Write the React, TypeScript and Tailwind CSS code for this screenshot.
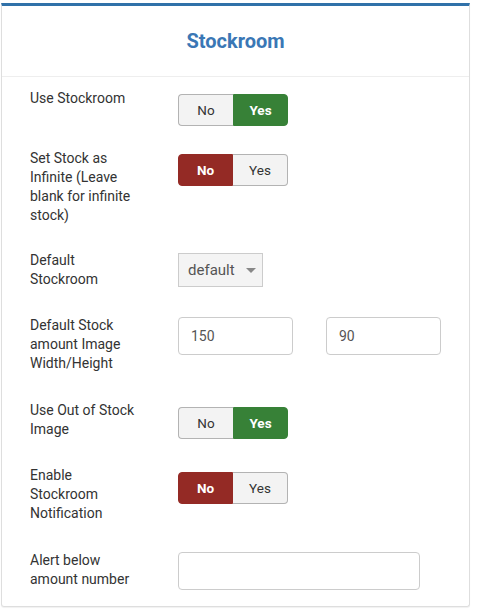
const Toggle = ({ value, className = "" }: { value: "yes" | "no"; className?: string }) => {
  const yes = value === "yes";
  return (
    <div className={`flex h-[32px] w-[110px] text-[13.5px] ${className}`}>
      <button
        className={`h-full w-[55px] rounded-l-[4px] border ${
          yes
            ? "border-[#b3b3b3] border-r-0 bg-[#f3f3f3] text-[#333]"
            : "border-[#942a25] bg-[#942a25] font-bold text-white"
        }`}
      >
        No
      </button>
      <button
        className={`h-full w-[55px] rounded-r-[4px] border ${
          yes
            ? "border-[#378137] bg-[#378137] font-bold text-white"
            : "border-[#b3b3b3] border-l-0 bg-[#f3f3f3] text-[#333]"
        }`}
      >
        Yes
      </button>
    </div>
  );
};

const Row = ({
  lines,
  className = "",
  children,
}: {
  lines: string[];
  className?: string;
  children: React.ReactNode;
}) => (
  <div className={`flex items-start ${className}`}>
    <label className="w-[176px] shrink-0 pl-[28px] text-[14px] leading-[19px] text-[#333]">
      {lines.map((l, i) => (
        <span key={i} className="block whitespace-nowrap">
          {l}
        </span>
      ))}
    </label>
    {children}
  </div>
);

const App = () => {
  return (
    <div className="min-h-screen bg-white pt-[3px] pl-px font-['Roboto',sans-serif]">
      <div className="w-[469px] rounded-b-[3px] border border-t-[3px] border-[#dedede] border-t-[#3071a9] shadow-[0_1px_1px_rgba(0,0,0,0.06)]">
        <header className="flex h-[71px] items-center justify-center border-b border-[#eeeeee]">
          <h2 className="text-[20px] font-bold leading-[28px] text-[#3a77b5]">Stockroom</h2>
        </header>

        <div className="flex flex-col pt-[12px] pb-[16px]">
          <Row lines={["Use Stockroom"]}>
            <Toggle value="yes" className="mt-[5px]" />
          </Row>

          <Row lines={["Set Stock as", "Infinite (Leave", "blank for infinite", "stock)"]} className="mt-[23px]">
            <Toggle value="no" className="mt-[5px]" />
          </Row>

          <Row lines={["Default", "Stockroom"]} className="mt-[26px]">
            <div className="mt-[2px] flex h-[34px] w-[85px] items-center justify-between border border-[#cccccc] bg-[#f4f4f4] pl-[9px] pr-[6px] text-[15px] text-[#555]">
              <span>default</span>
              <svg width="10" height="5" viewBox="0 0 10 5">
                <path d="M0 0h10L5 5z" fill="#888" />
              </svg>
            </div>
          </Row>

          <Row lines={["Default Stock", "amount Image", "Width/Height"]} className="mt-[27px]">
            <div className="mt-px flex gap-[33px]">
              <input
                defaultValue="150"
                className="h-[38px] w-[115px] rounded-[4px] border border-[#cccccc] bg-white pl-[12px] text-[14px] text-[#555] outline-none"
              />
              <input
                defaultValue="90"
                className="h-[38px] w-[115px] rounded-[4px] border border-[#cccccc] bg-white pl-[12px] text-[14px] text-[#555] outline-none"
              />
            </div>
          </Row>

          <Row lines={["Use Out of Stock", "Image"]} className="mt-[28px]">
            <Toggle value="yes" className="mt-[6px]" />
          </Row>

          <Row lines={["Enable", "Stockroom", "Notification"]} className="mt-[27px]">
            <Toggle value="no" className="mt-[6px]" />
          </Row>

          <Row lines={["Alert below", "amount number"]} className="mt-[28px]">
            <input className="mt-px h-[38px] w-[242px] rounded-[4px] border border-[#cccccc] bg-white pl-[12px] text-[14px] text-[#555] outline-none" />
          </Row>
        </div>
      </div>
    </div>
  );
};

export default App;
